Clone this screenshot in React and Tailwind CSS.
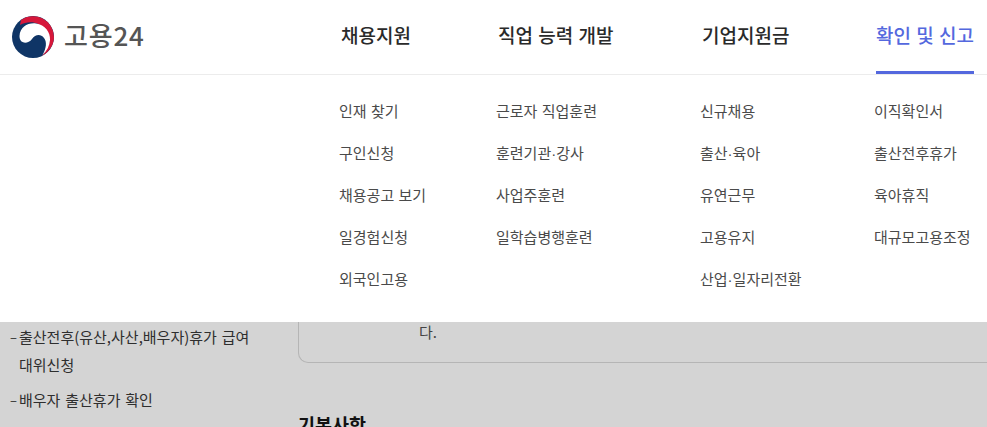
const font = { fontFamily: '"Noto Sans CJK KR", "Noto Sans", sans-serif' };

const columns = [
  { title: "채용지원", w: "w-[157px]", items: ["인재 찾기", "구인신청", "채용공고 보기", "일경험신청", "외국인고용"] },
  { title: "직업 능력 개발", w: "w-[204px]", items: ["근로자 직업훈련", ["훈련기관", "강사"], "사업주훈련", "일학습병행훈련"] },
  { title: "기업지원금", w: "w-[174px]", items: ["신규채용", ["출산", "육아"], "유연근무", "고용유지", ["산업", "일자리전환"]] },
  { title: "확인 및 신고", w: "w-[111px]", active: true, items: ["이직확인서", "출산전후휴가", "육아휴직", "대규모고용조정"] },
];

function Logo() {
  return (
    <svg width="42" height="42" viewBox="0 0 42 42" className="shrink-0">
      <circle cx="21" cy="21" r="21" fill="#0f3566" />
      <path d="M9 4A21 21 0 0 1 42 21C42 29 37 36 30 40C37 32 38 22 33 14C28 6 17 4 8 9Z" fill="#d6173a" />
      <path d="M7.5 20C8 11 16 6.5 24 7.5C33 9 38.5 16 38 24C37.5 30 35 35 30.5 39C34.5 32 35 26 32 22C28 17 23 19 20 23C17 27 12 27.5 9.5 25.5C8 24 7.5 22 7.5 20Z" fill="#fff" />
    </svg>
  );
}

function Item({ value }) {
  if (Array.isArray(value)) {
    return (
      <>
        {value[0]}
        <span className="[font-family:'Liberation_Sans',sans-serif]">·</span>
        {value[1]}
      </>
    );
  }
  return value;
}

export default function App() {
  return (
    <div className="w-[987px] h-[427px] overflow-hidden bg-[#d4d4d4] text-[#333] [word-spacing:1px]" style={font}>
      <div className="bg-white h-[322px]">
        <header className="h-[75px] border-b border-[#ececec] flex">
          <div className="w-[341px] pl-3 pt-4 flex items-start gap-[10px]">
            <Logo />
            <span className="text-[26px] leading-[38px] font-medium text-[#555] tracking-[0.8px]">고용24</span>
          </div>
          <nav className="flex">
            {columns.map((c) => (
              <div key={c.title} className={c.w}>
                <div className={`inline-block h-[74px] pt-[21px] text-[19px] leading-[28px] font-medium whitespace-nowrap ${c.active ? "text-[#5468de] border-b-[3px] border-[#5468de]" : "text-[#2a2a2a]"}`}>
                  {c.title}
                </div>
              </div>
            ))}
          </nav>
        </header>
        <div className="flex pl-[339px] pt-[25px]">
          {columns.map((c) => (
            <ul key={c.title} className={`${c.w} flex flex-col gap-5 shrink-0`}>
              {c.items.map((v, n) => (
                <li key={n} className="h-[22px] text-[15px] leading-[22px] text-[#4a4a4a] whitespace-nowrap"><Item value={v} /></li>
              ))}
            </ul>
          ))}
        </div>
      </div>
      <div className="flex">
        <ul className="w-[298px] shrink-0 pl-[10px] text-[15px] text-[#2e2e2e] [word-spacing:1.5px]">
          <li className="flex leading-[28px] mt-[1px]">
            <span className="w-[9px] shrink-0 text-[13px]">–</span>
            <span className="w-[240px]">출산전후(유산,사산,배우자)휴가 급여 대위신청</span>
          </li>
          <li className="flex leading-[28px] mt-[7px]">
            <span className="w-[9px] shrink-0 text-[13px]">–</span>
            <span>배우자 출산휴가 확인</span>
          </li>
        </ul>
        <div className="flex-1">
          <div className="h-[41px] border border-t-0 border-r-0 border-[#b5b5b5] rounded-bl-[10px] pl-[120px] text-[15px] leading-[20px] text-[#444]">다.</div>
          <h2 className="mt-[48px] text-[18.5px] leading-[26px] font-bold text-[#111]">기본사항</h2>
        </div>
      </div>
    </div>
  );
}
